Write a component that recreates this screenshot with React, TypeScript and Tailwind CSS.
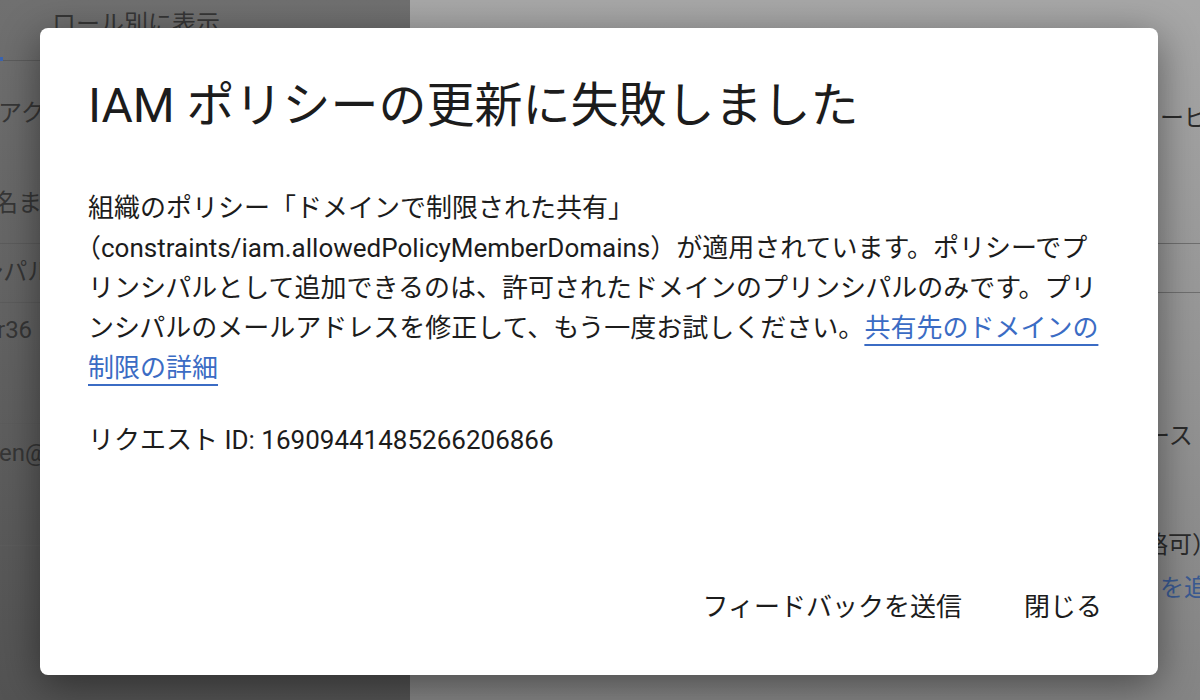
const BODY_FONT = "font-[Roboto,'Noto_Sans_CJK_JP',sans-serif]";

function LeftPane() {
  return (
    <div className="w-[410px] shrink-0 overflow-hidden bg-gradient-to-b from-[#707070] to-[#535353] text-[24px] leading-[32px] text-[#363636]">
      <div className="relative h-[61px] border-b border-[#5c5c5c]">
        <p className="whitespace-nowrap pl-[52px] pt-2">ロール別に表示</p>
        <span className="absolute bottom-[-1px] left-0 h-[4px] w-[3px] bg-[#3b64b0]" />
      </div>
      <div className="h-[183px] border-b border-[#5c5c5c]">
        <p className="ml-[-2px] whitespace-nowrap pt-[36px]">アク</p>
        <p className="ml-[-6px] mt-[58px] whitespace-nowrap">名ま</p>
      </div>
      <div className="h-[59px] border-b border-[#5c5c5c]">
        <p className="ml-[-20px] whitespace-nowrap pt-[12px]">シパル</p>
      </div>
      <div className="h-[121px] border-b border-[#5c5c5c]">
        <p className="ml-[-3px] whitespace-nowrap pt-[11px]">r36</p>
      </div>
      <div className="h-[122px] border-b border-[#5c5c5c]">
        <p className="ml-[-1px] whitespace-nowrap pt-[13px]">en@</p>
      </div>
    </div>
  );
}

function RightPane() {
  return (
    <div className="flex-1 overflow-hidden bg-gradient-to-b from-[#a7a7a7] to-[#858585] text-[24px] leading-[32px] text-[#2b2b2b]">
      <div className="h-[244px] border-b border-[#6f6f6f]">
        <p className="whitespace-nowrap pl-[750px] pt-[102px]">ービス</p>
      </div>
      <div className="h-[49px] border-b border-[#6f6f6f]" />
      <div>
        <p className="whitespace-nowrap pl-[736px] pt-[127px]">ース ↑</p>
        <p className="mt-[77px] whitespace-nowrap pl-[734px]">略可）</p>
        <p className="mt-[11px] whitespace-nowrap pl-[750px] text-[#3a5a92]">を追加</p>
      </div>
    </div>
  );
}

function ErrorDialog() {
  return (
    <div className="absolute left-[40px] top-[28px] flex h-[647px] w-[1118px] flex-col rounded-lg bg-white px-12 pb-[44px] pt-[50px] text-[#1c1c1c] shadow-[0_10px_40px_rgba(0,0,0,0.45)]">
      <h1 className="text-[48px] leading-[56px]">IAM ポリシーの更新に失敗しました</h1>

      <p className="mt-[54px] text-[26px] leading-[40px]">
        組織のポリシー「ドメインで制限された共有」
        <span className="whitespace-nowrap">（constraints/iam.allowedPolicyMemberDomains）</span>
        が適用されています。ポリシーでプリンシパルとして追加できるのは、許可されたドメインのプリンシパルのみです。プリンシパルのメールアドレスを修正して、もう一度お試しください。
        <a
          href="#"
          className="text-[#3b6cc4] underline decoration-2 underline-offset-[7px]"
        >
          共有先のドメインの制限の詳細
        </a>
      </p>

      <p className="mt-[32px] text-[26px] leading-[40px]">リクエスト ID: 16909441485266206866</p>

      <div className="mt-auto flex justify-end gap-[46px]">
        <button className="px-2 py-1 text-[26px] leading-[40px]">フィードバックを送信</button>
        <button className="px-2 py-1 text-[26px] leading-[40px]">閉じる</button>
      </div>
    </div>
  );
}

export default function App() {
  return (
    <div className={`relative h-[700px] w-[1200px] overflow-hidden ${BODY_FONT}`}>
      <div className="flex h-full">
        <LeftPane />
        <RightPane />
      </div>
      <ErrorDialog />
    </div>
  );
}
